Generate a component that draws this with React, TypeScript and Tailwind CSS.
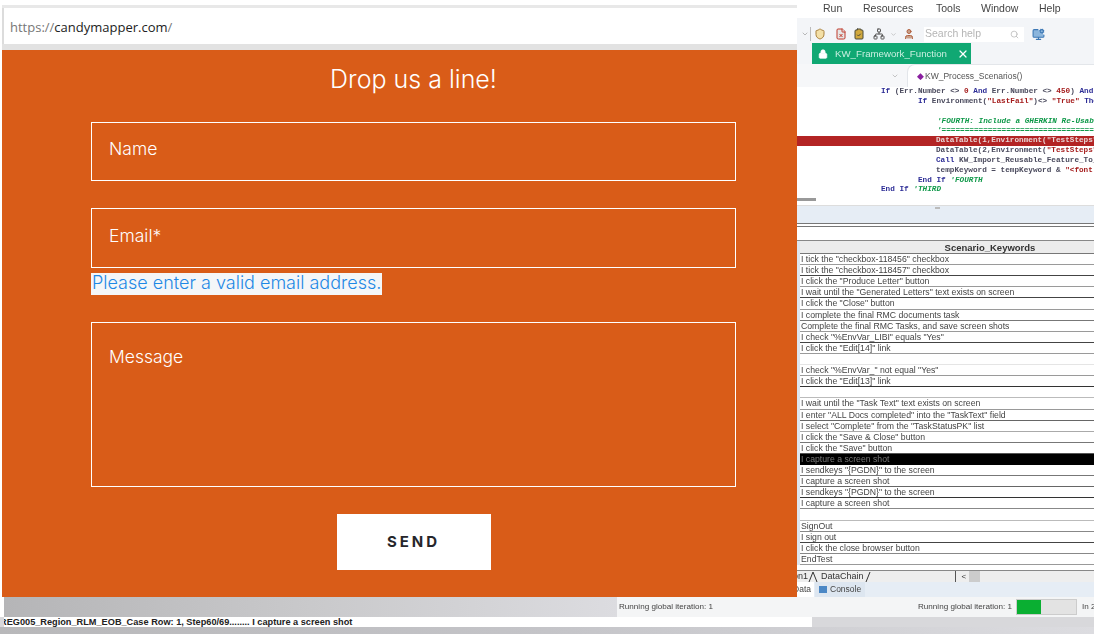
import { Lock, X, Search, Shield, FileX, ClipboardCheck, Network, User, MonitorCog, ChevronDown } from "lucide-react";

type Row = { text: string; line?: string; dark?: boolean };

const rows: Row[] = [
  { text: 'I tick the "checkbox-118456" checkbox', line: "border-[#9a9a9a]" },
  { text: 'I tick the "checkbox-118457" checkbox', line: "border-[#444]" },
  { text: 'I click the "Produce Letter" button', line: "border-[#9a9a9a]" },
  { text: 'I wait until the "Generated Letters" text exists on screen', line: "border-[#444]" },
  { text: 'I click the "Close" button', line: "border-[#9a9a9a]" },
  { text: "I complete the final RMC documents task", line: "border-[#777]" },
  { text: "Complete the final RMC Tasks, and save screen shots", line: "border-[#9a9a9a]" },
  { text: 'I check "%EnvVar_LIBI" equals "Yes"', line: "border-[#444]" },
  { text: 'I click the "Edit[14]" link', line: "border-[#9a9a9a]" },
  { text: "", line: "border-[#e5e5e5]" },
  { text: 'I check "%EnvVar_" not equal "Yes"', line: "border-[#9a9a9a]" },
  { text: 'I click the "Edit[13]" link', line: "border-[#333]" },
  { text: "", line: "border-[#bbb]" },
  { text: 'I wait until the "Task Text" text exists on screen', line: "border-[#999]" },
  { text: 'I enter "ALL Docs completed" into the "TaskText" field', line: "border-[#666]" },
  { text: 'I select "Complete" from the "TaskStatusPK" list', line: "border-[#aaa]" },
  { text: 'I click the "Save & Close" button', line: "border-[#777]" },
  { text: 'I click the "Save" button', line: "border-[#555]" },
  { text: "I capture a screen shot", dark: true, line: "border-[#000]" },
  { text: 'I sendkeys "{PGDN}" to the screen', line: "border-[#777]" },
  { text: "I capture a screen shot", line: "border-[#666]" },
  { text: 'I sendkeys "{PGDN}" to the screen', line: "border-[#333]" },
  { text: "I capture a screen shot", line: "border-[#888]" },
  { text: "", line: "border-[#bbb]" },
  { text: "SignOut", line: "border-[#888]" },
  { text: "I sign out", line: "border-[#444]" },
  { text: "I click the close browser button", line: "border-[#888]" },
  { text: "EndTest", line: "border-[#999]" },
];

function Field({ label, className }: { label: string; className: string }) {
  return (
    <div className={`border border-white pl-[17px] text-[17.5px] text-white ${className}`}>{label}</div>
  );
}

function ContactPanel() {
  return (
    <div className="ml-[2px] w-[795px] shrink-0 flex flex-col">
      <div className="h-[5px] bg-white" />
      <div className="h-[3px] bg-[#e8e8e8]" />
      <div className="h-[36px] bg-white border-l-2 border-[#dcdcdc] flex items-center pl-[6px] pt-[3px] text-[13px] font-['Open_Sans',sans-serif]">
        <span className="text-[#777]">https://</span>
        <span className="text-[#222]">candymapper.com</span>
        <span className="text-[#777]">/</span>
      </div>
      <div className="h-[6px] bg-[#e2e2e2]" />
      <div className="flex-1 bg-[#d95c18] pl-[89px] font-['Inter',sans-serif] font-light">
        <div className="w-[645px]">
          <h2 className="mt-[13px] h-[33px] text-center text-[25px] leading-[33px] text-white font-light">Drop us a line!</h2>
          <Field label="Name" className="mt-[26px] h-[59px] leading-[52px]" />
          <Field label="Email*" className="mt-[27px] h-[60px] leading-[54px]" />
          <div className="mt-[5px] h-[22px] flex">
            <span className="h-[22px] bg-[#f4f6f8] text-[18px] leading-[20px] text-[#1e88e5] px-px">
              Please enter a valid email address.
            </span>
          </div>
          <Field label="Message" className="mt-[27px] h-[165px] leading-[68px]" />
          <div className="mt-[27px] mx-auto h-[56px] w-[154px] bg-white flex items-center justify-center pt-[1px] text-[15px] font-bold tracking-[3px] text-[#26262b]">
            SEND
          </div>
        </div>
      </div>
    </div>
  );
}

function Code() {
  const kw = "text-[#2d2d96]";
  const str = "text-[#a51d1d]";
  const cm = "text-[#10994a] italic";
  return (
    <div className="h-[111px] bg-white font-['Liberation_Mono',monospace] text-[7.7px] leading-[9.85px] font-bold text-[#4b4b5e] whitespace-nowrap overflow-hidden">
      <div className="pl-[84px]">
        <span className={kw}>If</span> (Err.Number &lt;&gt; <span className={str}>0</span> <span className={kw}>And</span> Err.Number &lt;&gt; <span className={str}>450</span>) <span className={kw}>And</span>
      </div>
      <div className="pl-[121px]">
        <span className={kw}>If</span> Environment(<span className={str}>"LastFail"</span>)&lt;&gt; <span className={str}>"True"</span> <span className={kw}>Then</span>
      </div>
      <div className="h-[9.85px]" />
      <div className={`pl-[140px] ${cm}`}>'FOURTH: Include a GHERKIN Re-Usable</div>
      <div className={`pl-[140px] ${cm}`}>'===================================</div>
      <div className="pl-[139px] bg-[#b32424] text-[#e9d6d6]">DataTable(1,Environment("TestSteps")</div>
      <div className="pl-[139px]">DataTable(2,Environment(<span className={str}>"TestSteps"</span>)</div>
      <div className="pl-[139px]"><span className={kw}>Call</span> KW_Import_Reusable_Feature_To_</div>
      <div className="pl-[139px]">tempKeyword = tempKeyword &amp; <span className={str}>"&lt;font</span></div>
      <div className="pl-[121px]"><span className={kw}>End If</span>  <span className={cm}>'FOURTH</span></div>
      <div className="pl-[84px]"><span className={kw}>End If</span> <span className={cm}>'THIRD</span></div>
    </div>
  );
}

function Ide() {
  return (
    <div className="flex-1 min-w-0 flex flex-col bg-white font-['Liberation_Sans',sans-serif] blur-[0.4px] overflow-hidden">
      <div className="h-[18px] flex items-center pl-[26px] text-[10.5px] text-[#444]">
        <span className="w-[40px]">Run</span>
        <span className="w-[73px]">Resources</span>
        <span className="w-[45px]">Tools</span>
        <span className="w-[58px]">Window</span>
        <span>Help</span>
      </div>
      <div className="h-[25px] bg-[#f3f5f8] flex items-center pl-[4px] pt-[7px]">
        <ChevronDown size={8} className="text-[#999]" />
        <div className="ml-[1px] h-[14px] w-px bg-[#bbb]" />
        <Shield size={12} className="ml-[3px] text-[#a8803c]" fill="#f3dfa6" />
        <FileX size={12} className="ml-[9px] text-[#c0392b]" fill="#e6e6e6" />
        <ClipboardCheck size={12} className="ml-[6px] text-[#4a4a3a]" fill="#d2a93e" />
        <Network size={12} className="ml-[8px] text-[#555]" />
        <ChevronDown size={7} className="ml-[5px] text-[#aaa]" />
        <User size={12} className="ml-[6px] text-[#b0603f]" fill="#c9a08a" />
        <div className="ml-[9px] w-[100px] h-[15px] bg-white flex items-center justify-between px-[1px] text-[10.5px] text-[#b5b5b5]">
          Search help
          <Search size={9} className="mr-[4px]" />
        </div>
        <MonitorCog size={13} className="ml-[8px] text-[#3d78b5]" fill="#8bb5dc" />
      </div>
      <div className="h-[21px] bg-[#f3f5f8] pl-[15px]">
        <div className="h-full w-[159px] bg-[#10a873] flex items-center pl-[6px] pt-[1px] text-[9.7px] text-[#c9efe0]">
          <Lock size={10} className="text-white mr-[6px]" fill="white" />
          <span className="ml-[1px]">KW_Framework_Function</span>
          <X size={12} strokeWidth={2.5} className="text-white ml-[10px]" />
        </div>
      </div>
      <div className="h-[23px] bg-[#f6f7f9] flex items-center pl-[94px] text-[8.5px] text-[#555]">
        <ChevronDown size={8} className="text-[#aaa] mr-[8px]" />
        <div className="flex-1 h-full bg-white border-l border-t border-[#e3e6ea] rounded-tl-[8px] flex items-center pl-[9px]">
          <span className="text-[#8a1fa0] mr-[1px]">◆</span>KW_Process_Scenarios()
        </div>
      </div>
      <Code />
      <div className="h-[7px] bg-white flex items-start">
        <div className="w-[19px] h-[3px] bg-[#999]" />
      </div>
      <div className="h-[18px] bg-[#e6edf5] border-t border-[#ddd] flex justify-center pr-[16px]">
        <span className="mt-[1px] w-[5px] h-[2px] bg-[#bbb]" />
      </div>
      <div className="h-[4px] border-y border-[#777] bg-white" />
      <div className="h-[14px] bg-white border-b border-[#888]" />
      <div className="flex">
        <div className="w-[3px] shrink-0 bg-[#dde6f0]" />
        <div className="flex-1 min-w-0 text-[8.7px] text-[#444]">
          <div className="h-[13px] text-center font-bold text-[9.5px] leading-[13px] text-[#333] bg-[#ececec] border-b border-[#777] pl-[86px]">
            Scenario_Keywords
          </div>
          {rows.map((r, i) => (
            <div
              key={i}
              className={`h-[11.12px] pl-[1px] leading-[10px] border-b whitespace-nowrap overflow-hidden ${r.line} ${r.dark ? "bg-black text-[#777]" : "bg-white"}`}
            >
              {r.text}
            </div>
          ))}
        </div>
      </div>
      <div className="h-[5px] bg-white" />
      <div className="h-[12px] bg-[#eeeeee] flex items-end text-[9px] leading-[11px] text-[#333] border-t border-[#888]">
        <span className="w-[11px] overflow-hidden flex justify-end">on1</span>
        <svg width="16" height="11" viewBox="0 0 16 11" className="shrink-0">
          <path d="M1 11 L5 1 L9 11" stroke="#333" fill="none" />
        </svg>
        <span className="-ml-[3px]">DataChain</span>
        <svg width="6" height="11" viewBox="0 0 6 11" className="ml-[1px] shrink-0">
          <path d="M1 11 L5 1" stroke="#333" fill="none" />
        </svg>
        <div className="ml-[84px] h-full border-l border-[#555] pl-[6px] text-[8px]">&lt;</div>
        <div className="ml-[3px] h-full w-[11px] bg-[#ccc]" />
      </div>
      <div className="h-[15px] bg-[#e6edf5] flex items-center text-[8.5px] text-[#444]">
        <span className="bg-white h-full w-[17px] overflow-hidden flex items-center justify-end pr-[3px] shrink-0">Data</span>
        <span className="ml-[1px] h-full bg-[#dde6f0] flex items-center px-[4px] gap-[3px]">
          <span className="inline-block w-[8px] h-[7px] bg-[#4b87c5]" />
          Console
        </span>
      </div>
    </div>
  );
}

export default function App() {
  return (
    <div className="w-[1094px] h-[634px] flex flex-col overflow-hidden bg-white">
      <div className="h-[597px] flex shrink-0">
        <ContactPanel />
        <Ide />
      </div>
      <div className="h-[20px] flex shrink-0 font-['Liberation_Sans',sans-serif] text-[8.1px] text-[#444] blur-[0.3px]">
        <div className="w-[4px] bg-white" />
        <div className="w-[613px] bg-gradient-to-r from-[#b5b5b7] via-[#c9c9cb] to-[#dcdce0]" />
        <div className="flex-1 min-w-0 bg-[#f4f5f6] flex items-center pl-[2px] whitespace-nowrap">
          <span className="w-[299px] shrink-0">Running global iteration: 1</span>
          <span className="w-[98px] shrink-0">Running global iteration: 1</span>
          <div className="w-[61px] h-[16px] shrink-0 bg-[#e3e3e3] border border-[#ccc]">
            <div className="w-[24px] h-full bg-[#0aaf32]" />
          </div>
          <span className="ml-[5px]">In 2</span>
        </div>
      </div>
      <div className="h-[10px] flex shrink-0 bg-[#d8d8db]">
        <div className="ml-[4px] w-[808px] bg-white text-[9.2px] leading-[10px] font-bold text-[#222] font-['Liberation_Sans',sans-serif] whitespace-nowrap overflow-hidden">
          <span className="-ml-[4px] inline-block">REG005_Region_RLM_EOB_Case  Row: 1,  Step60/69........ I capture a screen shot</span>
        </div>
      </div>
      <div className="flex-1 bg-gradient-to-r from-[#b8b8ba] via-[#c4c4c8] to-[#dcdce0]" />
    </div>
  );
}
